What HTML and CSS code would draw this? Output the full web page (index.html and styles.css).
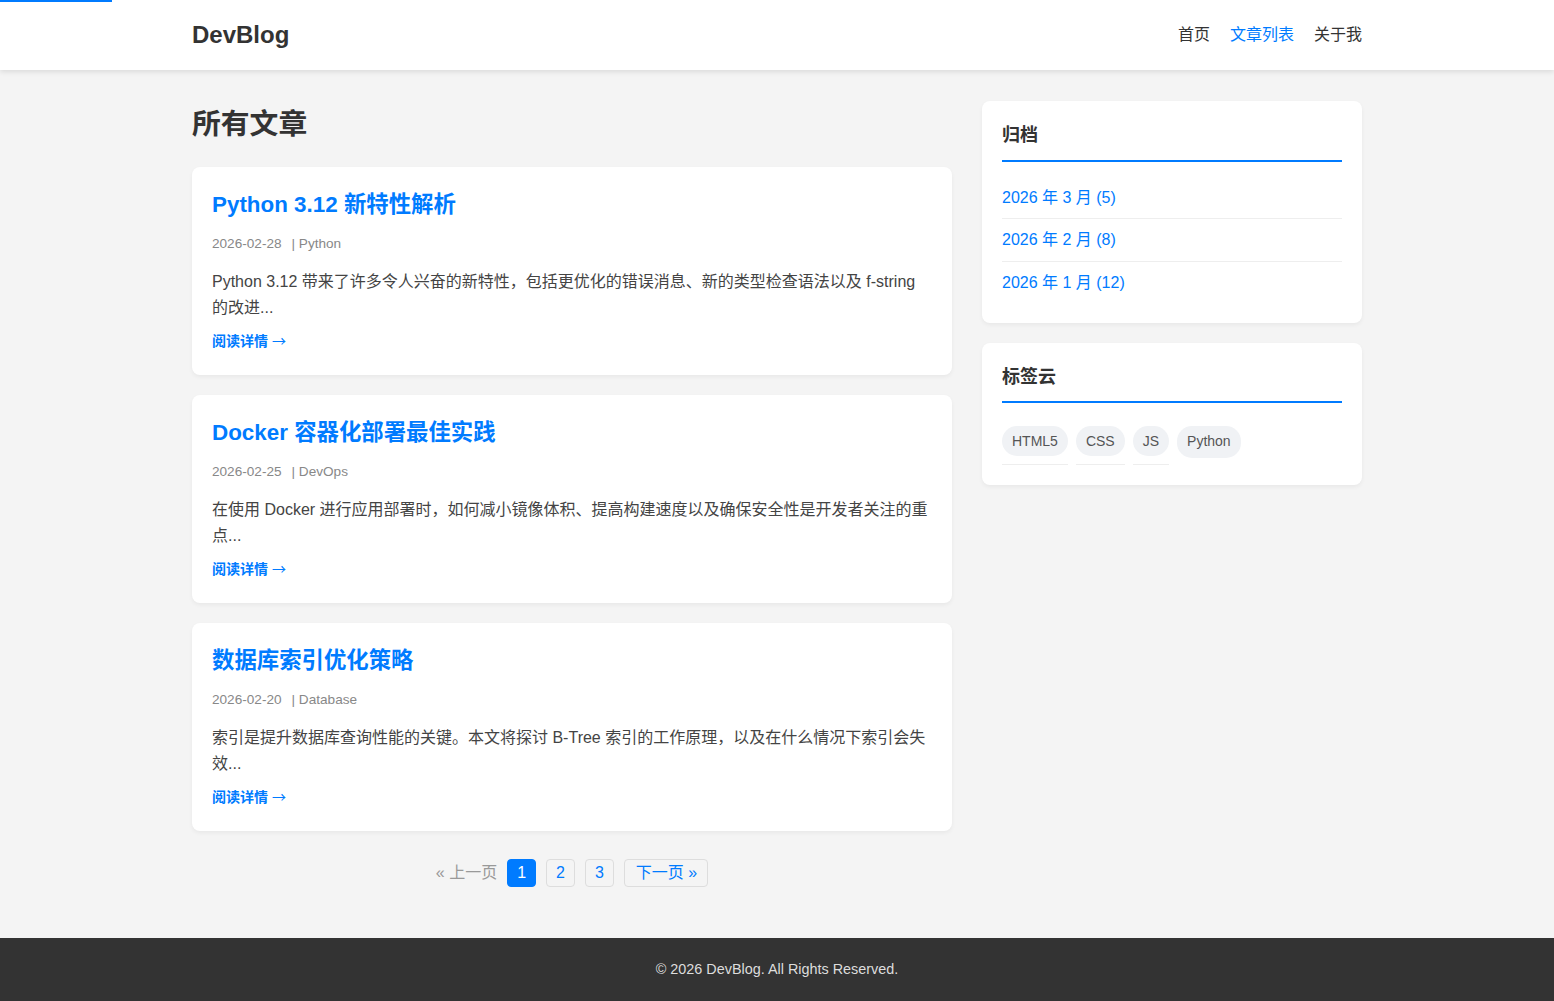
FILE: index.html
```html
<!DOCTYPE html>
<html lang="zh-CN">
<head>
  <meta charset="UTF-8" />
  <meta name="viewport" content="width=device-width, initial-scale=1.0" />
  <title>文章列表 - DevBlog</title>
  <link rel="stylesheet" href="styles.css">
</head>
<body>
  <div class="progress-bar"></div>

  <header class="site-header">
    <div class="header-inner">
      <a href="#" class="logo">DevBlog</a>
      <nav class="main-nav">
        <a href="#">首页</a>
        <a href="#" class="active">文章列表</a>
        <a href="#">关于我</a>
      </nav>
    </div>
  </header>

  <div class="container">
    <main class="content">
      <h1 class="page-title">所有文章</h1>

      <article class="post-card">
        <h2><a href="#">Python 3.12 新特性解析</a></h2>
        <div class="meta"><span>2026-02-28</span><span class="cat">| Python</span></div>
        <p class="excerpt">Python 3.12 带来了许多令人兴奋的新特性，包括更优化的错误消息、新的类型检查语法以及 f-string 的改进...</p>
        <a href="#" class="read-more">阅读详情 <span class="arrow">→</span></a>
      </article>

      <article class="post-card">
        <h2><a href="#">Docker 容器化部署最佳实践</a></h2>
        <div class="meta"><span>2026-02-25</span><span class="cat">| DevOps</span></div>
        <p class="excerpt">在使用 Docker 进行应用部署时，如何减小镜像体积、提高构建速度以及确保安全性是开发者关注的重点...</p>
        <a href="#" class="read-more">阅读详情 <span class="arrow">→</span></a>
      </article>

      <article class="post-card">
        <h2><a href="#">数据库索引优化策略</a></h2>
        <div class="meta"><span>2026-02-20</span><span class="cat">| Database</span></div>
        <p class="excerpt">索引是提升数据库查询性能的关键。本文将探讨 B-Tree 索引的工作原理，以及在什么情况下索引会失效...</p>
        <a href="#" class="read-more">阅读详情 <span class="arrow">→</span></a>
      </article>

      <div class="pagination">
        <span class="disabled">« 上一页</span>
        <a href="#" class="current">1</a>
        <a href="#">2</a>
        <a href="#">3</a>
        <a href="#">下一页 »</a>
      </div>
    </main>

    <aside class="sidebar">
      <div class="widget">
        <h3>归档</h3>
        <ul>
          <li><a href="#">2026 年 3 月 (5)</a></li>
          <li><a href="#">2026 年 2 月 (8)</a></li>
          <li><a href="#">2026 年 1 月 (12)</a></li>
        </ul>
      </div>

      <div class="widget">
        <h3>标签云</h3>
        <ul class="tags">
          <li><a href="#">HTML5</a></li>
          <li><a href="#">CSS</a></li>
          <li><a href="#">JS</a></li>
          <li><a href="#">Python</a></li>
        </ul>
      </div>
    </aside>
  </div>

  <footer class="site-footer">
    <p>© 2026 DevBlog. All Rights Reserved.</p>
  </footer>
</body>
</html>
```

FILE: styles.css
```css
body {
  margin: 0;
  font-family: "Liberation Sans", Arial, "Noto Sans CJK SC", sans-serif;
  background-color: #f4f4f4;
  color: #333;
  line-height: 1.6;
}
a {
  text-decoration: none;
  color: #007bff;
}
.progress-bar {
  position: fixed;
  top: 0;
  left: 0;
  width: 112px;
  height: 2px;
  background-color: #007bff;
  z-index: 10;
}
.site-header {
  background-color: #fff;
  box-shadow: 0 2px 5px rgba(0, 0, 0, 0.1);
}
.header-inner {
  width: 1170px;
  margin: 0 auto;
  height: 70px;
  display: flex;
  align-items: center;
  justify-content: space-between;
}
.logo {
  font-size: 24px;
  font-weight: bold;
  color: #333;
}
.main-nav {
  display: flex;
  gap: 20px;
}
.main-nav a {
  color: #333;
  font-size: 16px;
}
.main-nav a.active {
  color: #007bff;
}
.container {
  width: 1170px;
  margin: 0 auto;
  padding: 30px 0 51px;
  display: grid;
  grid-template-columns: 760px 380px;
  gap: 30px;
  align-items: start;
}
.page-title {
  font-size: 28.8px;
  line-height: 46px;
  margin: 1px 0 20px;
}
.post-card {
  background-color: #fff;
  border-radius: 8px;
  padding: 20px 20px 23px;
  margin-bottom: 20px;
  box-shadow: 0 2px 4px rgba(0, 0, 0, 0.05);
}
.post-card h2 {
  font-size: 22.4px;
  margin: 0 0 10px;
}
.meta {
  font-size: 13.6px;
  color: #888;
  margin-bottom: 14px;
}
.meta .cat {
  margin-left: 10px;
}
.excerpt {
  font-size: 16px;
  line-height: 26px;
  color: #444;
  margin: 0 0 8.5px;
}
.read-more {
  display: block;
  font-size: 14px;
  font-weight: bold;
  line-height: 22px;
}
.read-more .arrow {
  font-family: "Noto Sans CJK SC", sans-serif;
  font-weight: normal;
}
.pagination {
  display: flex;
  justify-content: center;
  align-items: center;
  gap: 10px;
  margin-top: 28px;
}
.pagination a, .pagination span {
  font-size: 16px;
  line-height: 24px;
  padding: 1px 9px;
  border: 1px solid #ddd;
  border-radius: 4px;
}
.pagination a:last-child {
  padding: 1px 10px 1px 11px;
}
.pagination a.current {
  background-color: #007bff;
  border-color: #007bff;
  color: #fff;
}
.pagination .disabled {
  color: #999;
  border: none;
  padding: 0;
}
.sidebar {
  padding-top: 1px;
}
.widget {
  background-color: #fff;
  border-radius: 8px;
  padding: 20px;
  margin-bottom: 20px;
  box-shadow: 0 2px 4px rgba(0, 0, 0, 0.05);
}
.widget h3 {
  font-size: 18px;
  margin: 0 0 15px;
  padding-bottom: 10px;
  border-bottom: 2px solid #007bff;
}
.widget ul {
  list-style: none;
  margin: 0;
  padding: 0;
}
.widget li {
  padding: 8px 0;
  border-bottom: 1px solid #eee;
}
.widget li:last-child {
  border-bottom: none;
  padding-bottom: 7px;
}
.widget li a {
  font-size: 16px;
}
.tags {
  display: flex;
  flex-wrap: wrap;
  gap: 8px;
}
.tags li {
  display: flex;
}
.tags li a {
  font-size: 14px;
  line-height: 22px;
  padding: 4px 10px;
  color: #555;
  background-color: #f0f2f5;
  border-radius: 15px;
}
.site-footer {
  background-color: #333;
  color: #ddd;
  text-align: center;
  padding: 20px 20px 22px;
  font-size: 14.4px;
  line-height: 22px;
}
.site-footer p {
  margin: 0;
}
```
